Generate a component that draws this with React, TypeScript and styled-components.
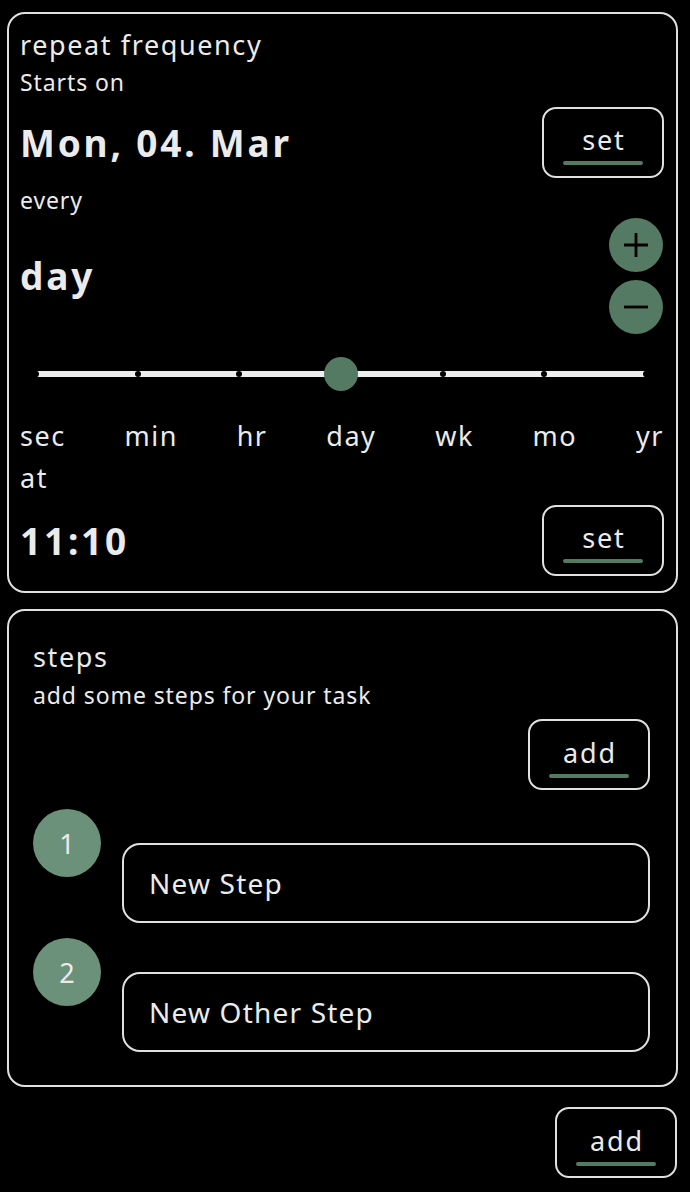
import { FC } from "react";
import styled, { createGlobalStyle } from "styled-components";

const GREEN = "#547a64";
const STEP_GREEN = "#6b917a";
const TEXT = "#ebebeb";
const LINE = "#e0e0e0";

const units = ["sec", "min", "hr", "day", "wk", "mo", "yr"];
const selectedUnit = 3;

const steps = [
  { id: 1, label: "New Step" },
  { id: 2, label: "New Other Step" },
];

const GlobalStyle = createGlobalStyle`
  html, body {
    margin: 0;
    background: #000;
  }
  body {
    font-family: "Noto Sans", "Open Sans", sans-serif;
    color: ${TEXT};
  }
`;

const Page = styled.div`
  display: flex;
  flex-direction: column;
  padding: 12px 12px 16px 7px;
  width: 690px;
  box-sizing: border-box;
`;

const Card = styled.section<{ $pad: string; $top?: number }>`
  border: 2px solid ${LINE};
  border-radius: 18px;
  padding: ${(p) => p.$pad};
  margin-top: ${(p) => p.$top ?? 0}px;
  display: flex;
  flex-direction: column;
`;

const Title = styled.div<{ $lh: number }>`
  font-size: 27px;
  line-height: ${(p) => p.$lh}px;
  letter-spacing: 1.6px;
`;

const Caption = styled.div<{ $lh: number }>`
  font-size: 23px;
  line-height: ${(p) => p.$lh}px;
  letter-spacing: 0.9px;
`;

const ValueRow = styled.div<{ $h: number }>`
  display: flex;
  align-items: center;
  justify-content: space-between;
  height: ${(p) => p.$h}px;
`;

const BigValue = styled.div`
  font-size: 37px;
  font-weight: 700;
  line-height: 48px;
  letter-spacing: 2.8px;
  padding-top: 2px;
`;

const OutlineButton = styled.button<{ $right?: number }>`
  width: 122px;
  height: 71px;
  box-sizing: border-box;
  border: 2px solid ${LINE};
  border-radius: 14px;
  background: transparent;
  color: ${TEXT};
  font-family: inherit;
  font-size: 27px;
  letter-spacing: 1.8px;
  display: flex;
  flex-direction: column;
  align-items: center;
  justify-content: center;
  padding: 4px 0 0;
  margin-right: ${(p) => p.$right ?? 0}px;
  flex-shrink: 0;
`;

const ButtonLabel = styled.span`
  line-height: 34px;
  padding-left: 2px;
`;

const Underline = styled.span`
  display: block;
  width: 80px;
  height: 4px;
  margin-top: 4px;
  border-radius: 2px;
  background: ${GREEN};
`;

const RoundButtons = styled.div`
  display: flex;
  flex-direction: column;
  gap: 8px;
  padding-top: 2px;
  margin-right: 1px;
`;

const RoundButton = styled.button`
  width: 54px;
  height: 54px;
  border-radius: 50%;
  border: none;
  background: ${GREEN};
  display: flex;
  align-items: center;
  justify-content: center;
  padding: 0;
`;

const SliderArea = styled.div`
  height: 80px;
  display: flex;
  align-items: center;
  padding: 0 18px 0 16px;
`;

const Track = styled.div`
  position: relative;
  flex: 1;
  height: 6px;
  border-radius: 3px;
  background: #eeeeee;
`;

const Tick = styled.span`
  position: absolute;
  top: 50%;
  width: 6px;
  height: 6px;
  border-radius: 50%;
  background: #000;
  transform: translate(-50%, -50%);
`;

const Thumb = styled.span`
  position: absolute;
  top: 50%;
  width: 34px;
  height: 34px;
  border-radius: 50%;
  background: ${GREEN};
  transform: translate(-50%, -50%);
`;

const UnitLabels = styled.div`
  display: flex;
  justify-content: space-between;
  font-size: 27px;
  line-height: 34px;
  letter-spacing: 1.5px;
  margin-top: 5px;
`;

const RightRow = styled.div<{ $top: number; $right?: number }>`
  display: flex;
  justify-content: flex-end;
  margin-top: ${(p) => p.$top}px;
  margin-right: ${(p) => p.$right ?? 0}px;
`;

const StepList = styled.div`
  display: flex;
  flex-direction: column;
  gap: 15px;
  margin-top: 19px;
`;

const StepRow = styled.div`
  display: flex;
  gap: 21px;
`;

const StepNumber = styled.div`
  width: 68px;
  height: 68px;
  border-radius: 50%;
  background: ${STEP_GREEN};
  display: flex;
  align-items: center;
  justify-content: center;
  font-size: 27px;
  flex-shrink: 0;
`;

const StepField = styled.div`
  flex: 1;
  height: 80px;
  margin-top: 34px;
  box-sizing: border-box;
  border: 2px solid ${LINE};
  border-radius: 18px;
  display: flex;
  align-items: center;
  padding-left: 25px;
  font-size: 28px;
  letter-spacing: 1.2px;
`;

const PlusIcon: FC<{ minus?: boolean }> = ({ minus }) => (
  <svg width="28" height="28" viewBox="0 0 28 28">
    <path
      d={minus ? "M2 14h24" : "M2 14h24M14 2v24"}
      stroke="#000"
      strokeWidth="2.8"
      fill="none"
    />
  </svg>
);

const SetButton: FC<{ label: string; right?: number }> = ({ label, right }) => (
  <OutlineButton $right={right}>
    <ButtonLabel>{label}</ButtonLabel>
    <Underline />
  </OutlineButton>
);

const FrequencySlider: FC = () => (
  <SliderArea>
    <Track>
      {units.map((u, i) =>
        i === selectedUnit ? null : (
          <Tick key={u} style={{ left: `${(i / (units.length - 1)) * 100}%` }} />
        )
      )}
      <Thumb style={{ left: `${(selectedUnit / (units.length - 1)) * 100}%` }} />
    </Track>
  </SliderArea>
);

export default function App() {
  return (
    <>
      <GlobalStyle />
      <Page>
        <Card $pad="12px 12px 13px 11px">
          <Title $lh={38}>repeat frequency</Title>
          <Caption $lh={36}>Starts on</Caption>
          <ValueRow $h={84}>
            <BigValue>Mon, 04. Mar</BigValue>
            <SetButton label="set" />
          </ValueRow>
          <Caption $lh={32}>every</Caption>
          <ValueRow $h={118}>
            <BigValue>day</BigValue>
            <RoundButtons>
              <RoundButton aria-label="increase">
                <PlusIcon />
              </RoundButton>
              <RoundButton aria-label="decrease">
                <PlusIcon minus />
              </RoundButton>
            </RoundButtons>
          </ValueRow>
          <FrequencySlider />
          <UnitLabels>
            {units.map((u) => (
              <span key={u}>{u}</span>
            ))}
          </UnitLabels>
          <Title $lh={49}>at</Title>
          <ValueRow $h={76}>
            <BigValue>11:10</BigValue>
            <SetButton label="set" />
          </ValueRow>
        </Card>

        <Card $pad="26px 26px 33px 24px" $top={16}>
          <Title $lh={40}>steps</Title>
          <Caption $lh={36}>add some steps for your task</Caption>
          <RightRow $top={6}>
            <SetButton label="add" />
          </RightRow>
          <StepList>
            {steps.map((s) => (
              <StepRow key={s.id}>
                <StepNumber>{s.id}</StepNumber>
                <StepField>{s.label}</StepField>
              </StepRow>
            ))}
          </StepList>
        </Card>

        <RightRow $top={20} $right={1}>
          <SetButton label="add" />
        </RightRow>
      </Page>
    </>
  );
}
